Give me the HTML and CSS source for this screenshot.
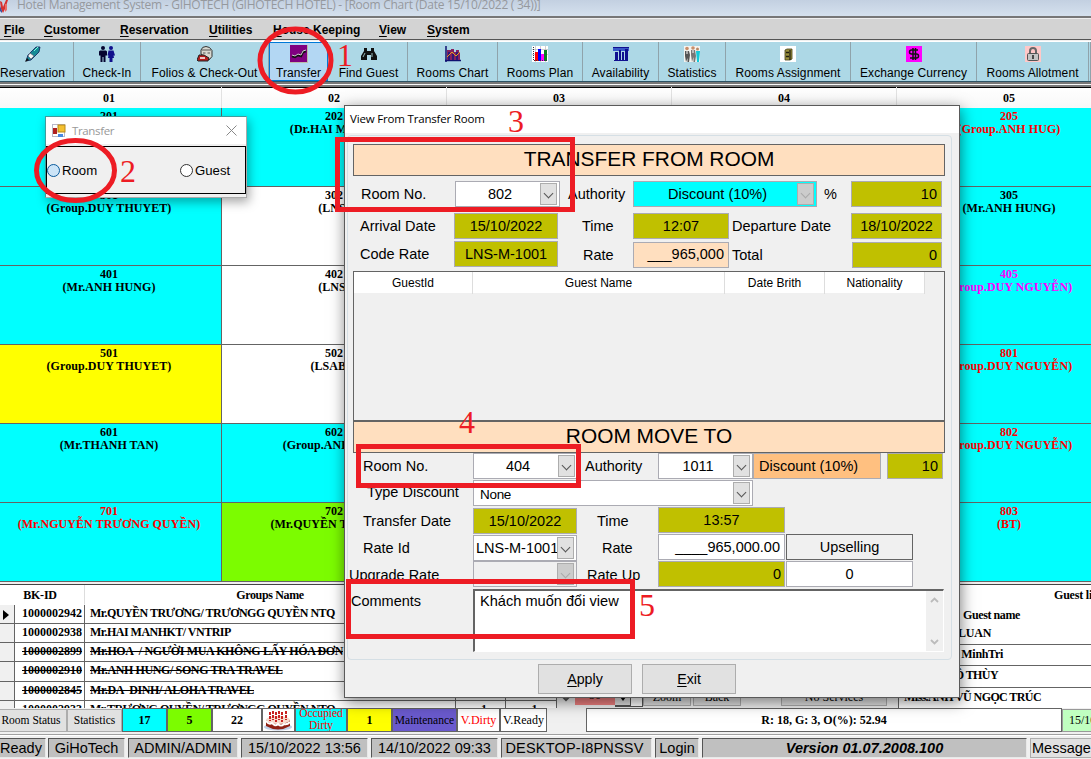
FILE: index.html
```html
<!DOCTYPE html>
<html lang="en">
<head>
<meta charset="utf-8">
<title>Hotel Management System</title>
<link rel="stylesheet" href="styles.css">
</head>
<body>
<div class="app">
  <header class="titlebar">
    <svg class="logo" width="10" height="14" viewBox="0 0 10 14"><path d="M0 1l2 1 1 5 3-7 2 0-3 9-2 4-2-4z" fill="#d63030"/><path d="M5 4l2 0 0 6-2 2z" fill="#e9706a"/><path d="M0 6l2 5v2l-2-2z" fill="#3c4f9c"/></svg>
    <span class="title">Hotel Management System - GIHOTECH (GIHOTECH HOTEL) - [Room Chart (Date 15/10/2022 ( 34))]</span>
  </header>
  <nav class="menubar">
    <span class="m1"><u>F</u>ile</span><span class="m2"><u>C</u>ustomer</span><span class="m3"><u>R</u>eservation</span><span class="m4"><u>U</u>tilities</span><span class="m5"><u>H</u>ouse Keeping</span><span class="m6"><u>V</u>iew</span><span class="m7"><u>S</u>ystem</span>
  </nav>
  <div class="toolbar">
    <div class="tool t1"><svg viewBox="0 0 16 16"><path d="M1 15l2-6 8-8 4 0-1 5-8 8z" fill="#178a96" stroke="#10205a" stroke-width=".8"/><path d="M9 5l4-4" stroke="#7fd" fill="none"/><path d="M5 7l4 3-3 3-3-3z" fill="#f4f4f4" stroke="#556" stroke-width=".6"/><path d="M0 16l2-4 2 2z" fill="#111"/></svg><span>Reservation</span></div>
    <div class="tool t2"><svg viewBox="0 0 16 16"><circle cx="4" cy="2" r="2" fill="#050530"/><path d="M1 4.500h6l1 1v4H6.500V16h-2v-5h-1v5h-2V9.500H0v-4z" fill="#050530"/><circle cx="12" cy="2" r="2" fill="#10108c"/><path d="M9.500 4.500h5l1.500 5h-1.500l.5 2.500h-1.500v4h-3v-4H9l.5-2.500H8.500z" fill="#10108c"/></svg><span>Check-In</span></div>
    <div class="tool t3"><svg viewBox="0 0 16 16"><path d="M4 8V4q1-3.500 5-3.500T15 4.500v6l-3 3.500z" fill="#d8d8d0" stroke="#333"/><path d="M5 4h9M6 7h2.500M10.500 7H13" stroke="#555"/><path d="M0 14l2-5 5 0 5 3-1 3H1z" fill="#b51c1c" stroke="#222"/><path d="M3 12h5" stroke="#fff" stroke-width="1.500"/></svg><span>Folios &amp; Check-Out</span></div>
    <div class="tool t4 selected"><svg class="big" viewBox="0 0 18 18"><rect width="18" height="18" fill="#800080"/><path d="M2 11l3 1 3-2 3 1 2-4 3-1" stroke="#111" stroke-width="2.400" fill="none"/><path d="M2 10l3 1 3-2 3 1 2-4 3-1" stroke="#d8c8d8" fill="none"/><path d="M0 17.500h18M17.500 0v18" stroke="#bba"/></svg><span>Transfer</span></div>
    <div class="tool t5"><svg viewBox="0 0 16 16"><path d="M3 2h3v3h4V2h3v3l3 5v4h-6V9H6v5H0v-4l3-5z" fill="#111"/><path d="M2 11l2-4M11 7v4" stroke="#9bb"/></svg><span>Find Guest</span></div>
    <div class="tool t6"><svg viewBox="0 0 16 16"><path d="M1 0v16M0 14.500h16" stroke="#101070" stroke-width="1.500"/><path d="M2 4h4V3h3v3h2V4h3v3h1v7H2z" fill="#842060"/><path d="M4 6v8M8 8v6M12 6v8" stroke="#141480" stroke-width="1.500"/><path d="M2 11l5-5 4 4 4-4" stroke="#e5a020" fill="none"/></svg><span>Rooms Chart</span></div>
    <div class="tool t7"><svg viewBox="0 0 16 16"><rect width="16" height="16" fill="#fff"/><path d="M0 3.500h16M0 8.500h16M3.500 0v16M8.500 0v16M13.500 0v16" stroke="#bbb" stroke-width=".7"/><path d="M3 6h3v9H3z" fill="#f00"/><path d="M6 3h3v12H6z" fill="#00f"/><path d="M9 8h3v7H9z" fill="#f0f"/><path d="M12 4h3v11h-3z" fill="#088020"/><path d="M1.500 1v13.500H16" stroke="#334" stroke-dasharray="1 1" fill="none"/></svg><span>Rooms Plan</span></div>
    <div class="tool t8"><svg viewBox="0 0 16 16"><path d="M0 1h16v4H0z" fill="#3858c8"/><path d="M0 1.500h16M1 14.500h14" stroke="#101090"/><path d="M2 6h3v8H2zM6 4h2v10H6zM9 6h2v8H9zM12 3h3v11h-3z" fill="#101090"/></svg><span>Availability</span></div>
    <div class="tool t9"><svg viewBox="0 0 16 16"><rect width="16" height="16" fill="#f4f4f0"/><circle cx="3" cy="2.500" r="1.800" fill="#c98e6a"/><circle cx="9" cy="2" r="1.800" fill="#c98e6a"/><path d="M1 5h4l1 4-1 7H3.500v-4L2 16 1 10z" fill="#555"/><path d="M7 4h4l1 6-1 6H9.500v-5L8 16 7 9z" fill="#777"/><circle cx="13.500" cy="3" r="1.500" fill="#b86"/><path d="M12 5h4l-1 11h-2z" fill="#12c8d8"/><path d="M3 5v3M9 4v3" stroke="#fff"/></svg><span>Statistics</span></div>
    <div class="tool t10"><svg viewBox="0 0 16 16"><rect width="16" height="16" fill="#fff"/><path d="M5 4l2-1h5v10l-2 1H5z" fill="#99903c" stroke="#44401a" stroke-width=".8"/><path d="M10 4v10M6 6.500h3M6 10.500h3" stroke="#221f10" stroke-width="1.300"/></svg><span>Rooms Assignment</span></div>
    <div class="tool t11"><svg viewBox="0 0 16 16"><rect width="16" height="16" fill="#f0f"/><path d="M12 4H5.500Q3.500 4 3.500 6t2 2h5q2 0 2 2t-2 2H4M7 2v12M9.500 2v12" stroke="#111" stroke-width="1.500" fill="none"/></svg><span>Exchange Currency</span></div>
    <div class="tool t12"><svg viewBox="0 0 16 16"><rect width="16" height="16" fill="#ffc8c8"/><path d="M5 8V5q0-3 3-3t3 3v3" stroke="#666" stroke-width="2" fill="none"/><rect x="2.500" y="7.500" width="11" height="7" rx="1" fill="#c4c4c4" stroke="#555"/><path d="M8 9v4" stroke="#222" stroke-width="1.500"/></svg><span>Rooms Allotment</span></div>
    <div class="tool t13"></div>
  </div>
  <div class="chart-head"><span>01</span><span>02</span><span>03</span><span>04</span><span>05</span></div>
  <main class="chart">
    <div class="cell">201<br>(Mr.ANH HUNG)</div><div class="cell">202<br>(Dr.HAI MANH)</div><div class="cell"></div><div class="cell"></div><div class="cell red">205<br>(Group.ANH HUG)</div>
    <div class="cell">301<br>(Group.DUY THUYET)</div><div class="cell free">302<br>(LNS)</div><div class="cell"></div><div class="cell"></div><div class="cell">305<br>(Mr.ANH HUNG)</div>
    <div class="cell">401<br>(Mr.ANH HUNG)</div><div class="cell free">402<br>(LNS)</div><div class="cell"></div><div class="cell"></div><div class="cell pink">405<br>(Group.DUY NGUYỄN)</div>
    <div class="cell yellow">501<br>(Group.DUY THUYET)</div><div class="cell free">502<br>(LSABF)</div><div class="cell"></div><div class="cell"></div><div class="cell red">801<br>(Group.DUY NGUYỄN)</div>
    <div class="cell">601<br>(Mr.THANH TAN)</div><div class="cell">602<br>(Group.ANH HUG)</div><div class="cell"></div><div class="cell"></div><div class="cell red">802<br>(Group.DUY NGUYỄN)</div>
    <div class="cell red">701<br>(Mr.NGUYỄN TRƯƠNG QUYỀN)</div><div class="cell green">702<br>(Mr.QUYỀN TRƯƠNG)</div><div class="cell"></div><div class="cell"></div><div class="cell red">803<br>(BT)</div>
  </main>
  <section class="lists">
    <div class="groups">
      <div class="grow ghead"><i></i><b>BK-ID</b><b>Groups Name</b><b></b><b></b></div>
      <div class="grow"><i><svg width="6" height="10"><path d="M0 0l6 5-6 5z"/></svg></i><b>1000002942</b><b>Mr.QUYỀN TRƯƠNG/ TRƯƠNGG QUYỀN NTQ</b><b></b><b></b></div>
      <div class="grow"><i></i><b>1000002938</b><b>Mr.HAI MANHKT/ VNTRIP</b><b></b><b></b></div>
      <div class="grow out"><i></i><b>1000002899</b><b class="wide">Mr.HOA&nbsp; / NGƯỜI MUA KHÔNG LẤY HÓA ĐƠN</b><b></b><b></b></div>
      <div class="grow out"><i></i><b>1000002910</b><b class="wide">Mr.ANH HUNG/ SONG TRA TRAVEL</b><b></b><b></b></div>
      <div class="grow out"><i></i><b>1000002845</b><b class="wide">Mr.DA&nbsp; DINH/ ALOHA TRAVEL</b><b></b><b></b></div>
      <div class="grow"><i></i><b>1000002933</b><b>Mr.TRƯƠNG QUYỀN/ TRƯƠNGG QUYỀN NTQ</b><b class="n">1</b><b class="n">1</b></div>
    </div>
    <div class="tools">
      <span class="scr"><svg width="10" height="7"><path d="M1 1l4 4 4-4" stroke="#555" stroke-width="2" fill="none"/></svg></span>
      <span class="spin">50</span><span class="updn"><svg width="6" height="4"><path d="M0 0h6L3 4z"/></svg></span><span class="chk"></span>
      <span class="tb zoomb">Zoom</span><span class="tb back">Back</span><span class="tb serv">No Services</span>
    </div>
    <div class="guests">
      <div class="gtitle">Guest list</div>
      <div class="gcol">Guest name</div>
      <div class="grw">Mr.TUAN LUAN</div>
      <div class="grw">Mr.Tran : MinhTri</div>
      <div class="grw">Mrs.NGÔ THÙY</div>
      <div class="grw">Miss.ANH VŨ NGỌC TRÚC</div>
    </div>
  </section>
  <section class="legend">
    <span class="btn l1">Room Status</span><span class="btn l2">Statistics</span><b class="cyan l3">17</b><b class="lime l3">5</b><b class="l4">22</b>
    <span class="l5"><svg width="29" height="22" viewBox="0 0 29 22"><ellipse cx="14" cy="18" rx="14" ry="3.500" fill="#bfd0e8"/><path d="M2 11v6q12 7 24 0v-6z" fill="#8f2014"/><ellipse cx="14" cy="11" rx="12" ry="4" fill="#f7d9cc"/><path d="M2 12q3 4 6 2 3 4 6 1 3 3 6 0 3 1 6-2" stroke="#fff" stroke-width="2" fill="none"/><path d="M6 3v9M9 2v9M12 3v10M15 2v9M18 3v10M22 2v9" stroke="#c82222" stroke-width="2" stroke-dasharray="3 1"/></svg></span>
    <span class="cyan occ l6">Occupied Dirty</span><b class="yel l3">1</b><span class="mnt l7">Maintenance</span><span class="rd l8">V.Dirty</span><span class="l9">V.Ready</span>
    <b class="sum">R: 18, G: 3, O(%): 52.94</b><span class="dt">15/10</span>
  </section>
  <footer class="status">
    <span class="s1">Ready</span><span class="s2">GiHoTech</span><span class="s3">ADMIN/ADMIN</span><span class="s4">15/10/2022 13:56</span><span class="s4">14/10/2022 09:33</span><span class="s5">DESKTOP-I8PNSSV</span><span class="s6">Login</span><span class="s7">Version 01.07.2008.100</span><span class="s8">Message</span>
  </footer>

  <section class="win small-win">
    <div class="wtitle"><svg width="14" height="14" viewBox="0 0 14 14"><rect x=".5" y=".5" width="12" height="12" fill="#fff" stroke="#b8b8c8"/><rect x="1" y="4" width="4" height="6" fill="#b02020"/><rect x="6" y="1" width="7" height="7" fill="#f4c030" stroke="#b88a18"/><rect x="6" y="10" width="5" height="3" fill="#4a88e0"/></svg><span>Transfer</span><svg class="close" width="11" height="11" viewBox="0 0 11 11"><path d="M.5.5l10 10M10.500.5l-10 10" stroke="#888" fill="none"/></svg></div>
    <div class="radios"><label><i class="on"></i>Room</label><label><i></i>Guest</label></div>
  </section>

  <section class="win dialog">
    <div class="dtitle">View From Transfer Room</div>
    <div class="frame">
      <h2 class="banner">TRANSFER FROM ROOM</h2>
      <div class="row r1"><span class="lab p8">Room No.</span><span class="fld combo"><em>802</em><i></i></span><span class="lab p8">Authority</span><span class="fld combo aqua off"><em>Discount (10%)</em><i></i></span><span class="lab p7">%</span><span class="fld olive right">10</span></div>
      <div class="row r2"><span class="lab p7">Arrival Date</span><span class="fld olive">15/10/2022</span><span class="lab p24">Time</span><span class="fld olive">12:07</span><span class="lab p3">Departure Date</span><span class="fld olive">18/10/2022</span></div>
      <div class="row r3"><span class="lab p7">Code Rate</span><span class="fld olive up">LNS-M-1001</span><span class="lab p25">Rate</span><span class="fld peach right">___965,000</span><span class="lab p3">Total</span><span class="fld olive right">0</span></div>
      <div class="table"><div class="thead"><span>GuestId</span><span>Guest Name</span><span>Date Brith</span><span>Nationality</span></div></div>
      <h2 class="banner second">ROOM MOVE TO</h2>
      <div class="row r4"><span class="lab p10">Room No.</span><span class="fld combo"><em>404</em><i></i></span><span class="lab p7">Authority</span><span class="fld combo"><em>1011</em><i></i></span><span class="fld orange left">Discount (10%)</span><span></span><span class="fld olive right">10</span></div>
      <div class="row r5"><span class="lab p14">Type Discount</span><span class="fld combo left"><em>None</em><i></i></span></div>
      <div class="row r6"><span class="lab p10">Transfer Date</span><span class="fld olive down">15/10/2022</span><span class="lab p20">Time</span><span class="fld olive">13:57</span></div>
      <div class="row r6"><span class="lab p10">Rate Id</span><span class="fld combo down tight"><em>LNS-M-1001</em><i></i></span><span class="lab p25">Rate</span><span class="fld right">____965,000.00</span><span class="fld ups">Upselling</span></div>
      <div class="row r6"><span class="lab p0">Upgrade Rate</span><span class="fld combo grey off"><em></em><i></i></span><span class="lab p10">Rate Up</span><span class="fld olive right zero">0</span><span class="fld">0</span></div>
      <div class="row r7"><span class="lab p2">Comments</span><div class="memo"><span>Khách muốn đổi view</span><div class="bar"><svg width="9" height="6"><path d="M1 5l3.500-3.500L8 5" stroke="#bbb" stroke-width="1.800" fill="none"/></svg><svg width="9" height="6"><path d="M1 1l3.500 3.500L8 1" stroke="#bbb" stroke-width="1.800" fill="none"/></svg></div></div></div>
    </div>
    <div class="actions"><span><u>A</u>pply</span><span><u>E</u>xit</span></div>
  </section>

  <svg class="marks" width="1091" height="759" viewBox="0 0 1091 759">
    <g fill="none" stroke="#ed1c24" stroke-width="5">
      <ellipse cx="295.500" cy="60.500" rx="35.500" ry="31.500"/>
      <ellipse cx="75.500" cy="170.500" rx="39" ry="30"/>
      <path d="M337.500 139.500h235v70h-235zM358.500 446.500h220v39h-220zM348.500 581.500h284v55h-284z"/>
    </g>
    <g class="nums"><text x="337" y="66">1</text><text x="120" y="182">2</text><text x="508" y="132">3</text><text x="459" y="433">4</text><text x="639" y="616">5</text></g>
  </svg>
</div>
</body>
</html>
```
FILE: styles.css
```css
* { box-sizing: border-box; }
body { margin: 0; font-family: "Liberation Sans", Arial, sans-serif; color: #000; }
.app { position: relative; width: 1091px; height: 759px; overflow: hidden; display: flex; flex-direction: column; background: #f0f0f0; white-space: nowrap; }
.titlebar { height: 16px; display: flex; background: linear-gradient(#c3d0e1, #d5e1ee); color: #96999e; }
.logo { flex: none; margin-right: 7px; }
.title { font: 12px/14px "Open Sans", sans-serif; margin-top: -2px; letter-spacing: -.265px; }
.menubar { height: 24px; border-top: 2px solid #777; box-shadow: inset 0 1px #eee; background: #d3d3d3; font-weight: bold; font-size: 12px; line-height: 24px; display: flex; padding-left: 4px; border-bottom: 1px solid #555; }
.menubar u, .actions u { text-underline-offset: 2px; }
.m1 { width: 40px; } .m2 { width: 76px; } .m3 { width: 89px; } .m4 { width: 64px; } .m5 { width: 106px; } .m6 { width: 48px; }
.toolbar { height: 41px; margin-top: 1px; border-top: 1px solid #fff; border-bottom: 1px solid #2c5365; background: #add8e6; display: flex; }
.tool { display: flex; flex-direction: column; align-items: center; border-right: 1px solid #8fa3ab; font-size: 12px; letter-spacing: .1px; }
.tool svg { width: 16px; height: 16px; margin: 4px 0 2px; flex: none; }
.tool svg.big { width: 18px; height: 18px; margin: 2px 0 1px; }
.tool span { line-height: 18px; }
.t1 { width: 74px; padding-right: 8px; } .t2 { width: 67px; } .t3 { width: 128px; } .t4 { width: 59px; } .t5 { width: 80px; padding-left: 2px; } .t6 { width: 90px; } .t7 { width: 85px; } .t8 { width: 76px; } .t9 { width: 67px; } .t10 { width: 125px; } .t11 { width: 126px; } .t12 { width: 112px; } .t13 { flex: 1; }
.selected { background: #b3d7f3; border: 1px solid #0078d7; }
.chart-head { height: 26px; border-top: 5px double #777; display: grid; grid-template-columns: repeat(5, 225px); margin-left: -3px; width: 1122px; background: linear-gradient(#fff, #f8f8f8); box-shadow: inset 0 1px #000; font: bold 12px/22px "Liberation Serif", serif; text-align: center; }
.chart-head span { border-right: 1px solid #e2e2e2; }
.chart { display: grid; grid-template-columns: repeat(5, 225px); grid-template-rows: repeat(6, 79px); margin-left: -3px; width: 1122px; font: bold 12px/13px "Liberation Serif", serif; letter-spacing: .06px; text-align: center; }
.cell { background: #0ff; border-right: 1px solid #646464; border-bottom: 1px solid #646464; padding-top: 2px; overflow: hidden; }
.free { background: #fff; } .yellow { background: #ff0; } .green { background: #7cfc00; }
.red { color: #f00; } .pink { color: #f0f; }
.lists { height: 126px; overflow: hidden; display: flex; font: bold 12px/17px "Liberation Serif", serif; border-top: 2px solid #f0f0f0; }
.groups { width: 557px; flex: none; border-top: 1px solid #444; background: #fff; }
.grow { display: grid; grid-template-columns: 15px 70px 371px 50px 51px; height: 19.150px; }
.grow > * { border-right: 1px solid #646464; border-bottom: 1px solid #646464; font-style: normal; overflow: hidden; }
.grow > i { background: #f0f0f0; padding-left: 3px; } .grow i svg { display: block; margin-top: 5px; }
.grow > b { padding-left: 7px; } .grow > b:nth-child(3) { padding-left: 5px; letter-spacing: -.52px; } .grow > b.wide:nth-child(3) { letter-spacing: -.38px; } .grow > .n { text-align: center; }
.grow.ghead { height: 20px; } .ghead > i, .grow.ghead > b { border-color: #fff; background: #fff; text-align: center; line-height: 21px; padding: 0; } .grow.ghead > b:nth-child(2) { border-right-color: #ddd; padding-right: 19px; letter-spacing: -.2px; }
.grow.ghead > b:nth-child(3) { letter-spacing: -.35px; }
.out b { text-decoration: line-through; }
.tools { width: 342px; flex: none; display: flex; align-items: flex-end; padding-bottom: 1px; font-weight: normal; }
.tools > span { height: 22px; text-align: center; }
.scr { width: 18px; padding-top: 8px; line-height: 10px; }
.spin { width: 40px; background: #f08080; margin-bottom: 2px; line-height: 25px; } .updn { width: 16px; background: #e1e1e1; border-right: 1px solid #555; border-bottom: 2px solid #555; padding-top: 7px; line-height: 10px; } .chk { width: 12px; background: #fff; border-bottom: 1px solid #555; border-right: 1px solid #555; }
.tb { background: #e1e1e1; border: 1px solid #adadad; line-height: 24px; margin-bottom: 1px; }
.zoomb { width: 48px; } .back { width: 48px; margin-left: 2px; } .serv { width: 106px; margin-left: 40px; }
.guests { flex: 1; margin-left: -1px; border-left: 1px solid #646464; border-top: 1px solid #444; background: #fff; }
.gtitle { height: 21px; line-height: 21px; padding-left: 155px; letter-spacing: -.2px; } .gcol { height: 18px; line-height: 19px; padding-left: 64px; letter-spacing: -.4px; }
.grw { height: 21.200px; line-height: 18px; border-bottom: 1px solid #646464; padding-left: 5px; letter-spacing: -.6px; width: 193px; overflow: hidden; }
.grw:last-child { border-bottom: 0; }
.gcol + .grw { line-height: 19px; }
.grw:nth-child(3) { text-align: right; padding-right: 114px; letter-spacing: -.2px; }
.grw:nth-child(4) { text-align: right; padding-right: 89px; letter-spacing: -.3px; }
.grw:nth-child(5) { text-align: right; padding-right: 94px; }
.legend { height: 24px; display: flex; font: 12px/22px "Liberation Serif", serif; background: #f0f0f0; text-align: center; }
.legend > * { border: 1px solid #646464; background: #fff; overflow: hidden; flex: none; }
.legend .btn { background: #e1e1e1; border-color: #adadad; font-size: 11.500px; margin-top: 1px; line-height: 20px; }
.legend .l1 { width: 67px; border-left: 0; padding-right: 4px; } .l2 { width: 55px; } .l3 { width: 45px; } .l4 { width: 50px; } .l5 { width: 33px; } .l5 svg { display: block; margin: 0 1px; } .l6 { width: 52px; } .l7 { width: 65px; } .l8 { width: 43px; } .l9 { width: 47px; }
.legend .cyan { background: #0ff; } .legend .lime { background: #7cfc00; } .legend .yel { background: #ff0; } .legend .mnt { background: #6a5acd; font-size: 11.500px; }
.legend .occ { color: #f00; white-space: normal; line-height: 12px; font-size: 11.500px; letter-spacing: -.1px; display: flex; align-items: center; padding-bottom: 2px; } .rd { color: #f00; }
.sum { width: 476px; margin-left: 39px; } .legend .dt { width: 40px; background: #c0ffc0; border-color: #999; text-align: left; padding-left: 6px; margin-top: 1px; line-height: 20px; }
.status { height: 25px; margin-top: 2px; padding-top: 3px; border-top: 1px solid #a0a0a0; display: flex; gap: 3px; font-size: 14.500px; line-height: 18px; text-align: center; box-shadow: inset 0 1px #fff; }
.status span { height: 20px; flex: none; background: #c0c0c0; border: 1px solid #555; border-right-color: #e8e8e8; border-bottom-color: #e8e8e8; overflow: hidden; }
.status .s1 { width: 46px; margin-right: -1px; border-left: 0; text-align: left; } .s2 { width: 77px; } .s3 { width: 110px; } .s4 { width: 127px; } .s5 { width: 151px; } .s6 { width: 44px; } .s7 { width: 325px; font-weight: bold; font-style: italic; } .status .s8 { width: 70px; background: #e1e1e1; text-align: left; padding-left: 1px; border-color: #adadad; }
.status .s5 { letter-spacing: .2px; padding-right: 4px; }
/* floating windows */
.win { position: absolute; background: #f0f0f0; }
.small-win { left: 45px; top: 116px; width: 202px; height: 82px; border: 1px solid #419c9c; border-right-color: #aaa; border-bottom-color: #aaa; box-shadow: 2px 4px 10px rgba(0,0,0,.35); }
.wtitle { height: 27px; background: #fff; display: flex; align-items: center; padding-left: 6px; gap: 6px; font: 11.500px "Open Sans", sans-serif; color: #999; letter-spacing: -.35px; } .close { margin: 0 9px 0 auto; }
.radios { margin: 2px 0 0; height: 48px; border: 1px solid #000; font-size: 13.200px; display: grid; grid-template-columns: 133px 1fr; align-items: center; }
.radios label { display: flex; align-items: center; gap: 2px; } .radios i { width: 13px; height: 13px; border: 1px solid #333; border-radius: 50%; background: #fff; } .radios .on { border-color: #0a5a9c; background: #cce4f7; }
.dialog { left: 344px; top: 105px; width: 616px; height: 593px; border: 1px solid #5a5a5a; box-shadow: 1px 4px 14px rgba(0,0,0,.5); padding: 0 7px 0 2px; }
.dtitle { height: 27px; margin: 0 -7px 2px -2px; background: #fff; font: 11.500px/26px "Open Sans", sans-serif; letter-spacing: -.18px; padding-left: 5px; }
.frame { height: 525px; border: 1px solid #d5dfe5; border-radius: 4px; padding: 8px 6px 0 5px; }
.banner { margin: 0; height: 32px; width: 592px; border: 1px solid #646464; background: #ffdfbf; font-size: 20.900px; font-weight: normal; line-height: 28px; text-align: center; }
.row { display: grid; grid-template-rows: 100%; font-size: 14.500px; line-height: 24px; height: 26px; }
.lab { line-height: 26px; }
.r1 { grid-template-columns: 102px 105px 73px 184px 34px 91px; margin-top: 5px; }
.r2 { grid-template-columns: 101px 104px 75px 96px 122px 91px; margin-top: 6px; }
.r3 { grid-template-columns: 101px 104px 75px 96px 123px 90px; margin-top: 3px; }
.r3 .lab:first-child { line-height: 24px; } .r3 .peach { line-height: 23px; }
.up { margin-top: -1px; margin-bottom: 1px; } .down { margin-top: 1px; margin-bottom: -1px; }
.fld { border: 1px solid #ababb3; background: #fff; text-align: center; overflow: hidden; }
.olive { background: #c0c000; } .peach { background: #ffdfbf; } .aqua { background: #0ff; } .orange { background: #ffc080; } .grey { background: #f0f0f0; } .ups { background: #f0f0f0; border-color: #646464; }
.right { text-align: right; padding-right: 4px; } .zero { padding-right: 3px; } .left { text-align: left; padding-left: 5px; }
.combo { display: flex; padding: 1px; } .combo em { flex: 1; font-style: normal; line-height: 22px; overflow: hidden; padding-left: 3px; text-align: center; }
.combo i { width: 17px; background: #e1e1e1; border: 1px solid #adadad; display: grid; place-items: center; margin-right: 1px; }
.combo i::after { content: ""; width: 6px; height: 6px; border: solid #555; border-width: 0 1px 1px 0; transform: translateY(-1px) rotate(45deg); }
.combo.off i { background: #ccc; } .combo.off i::after { border-color: #aaa; }
.p0 { margin-left: -4px; } .p2 { margin-left: -2px; } .p3 { padding-left: 3px; } .p7 { padding-left: 7px; } .p8 { padding-left: 8px; } .p10 { padding-left: 10px; } .p14 { padding-left: 14px; } .p20 { padding-left: 20px; } .p24 { padding-left: 24px; } .p25 { padding-left: 25px; }
.table { width: 592px; height: 150px; margin-top: 3px; border: 1px solid #646464; }
.thead { display: grid; grid-template-columns: 119px 252px 100px 100px; width: 571px; height: 21px; background: #fff; font-size: 12px; line-height: 22px; text-align: center; } .thead span { border-right: 1px solid #ddd; }
.r4 { grid-template-columns: 120px 105px 80px 95px 128px 6px 56px; }
.r5 { grid-template-columns: 120px 280px; margin-top: 1px; } .r5 .lab { line-height: 25px; } .r5 .combo { padding-left: 1px; } .r5 em { text-align: left; padding-left: 5px; font-size: 13.500px; line-height: 26px; letter-spacing: -.3px; }
.r6 { grid-template-columns: 120px 104px 81px 127px 1px 127px; margin-top: 1px; } .r6 .lab { line-height: 28px; }
.r6 > :nth-child(5) { grid-column: 6; }
.tight em { padding-left: 1px; text-align: left; }
.r7 { grid-template-columns: 120px 471px; height: 63px; margin-top: 2px; } .r7 .lab { line-height: 24px; }
.memo { border: 1px solid #fff; border-top: 2px solid #646464; border-left: 2px solid #646464; background: #fff; display: flex; justify-content: space-between; line-height: 20px; padding-left: 5px; font-size: 14.600px; }
.bar { width: 17px; background: #f0f0f0; display: flex; flex-direction: column; justify-content: space-between; align-items: center; padding: 6px 0; }
.actions { display: flex; gap: 10px; margin: 4px 0 0 191px; font-size: 14.200px; line-height: 29px; text-align: center; } .actions span { width: 94px; height: 30px; background: #e1e1e1; border: 1px solid #adadad; }
/* callouts over the windows */
.marks { position: absolute; left: 0; top: 0; }
.nums { fill: #ed1c24; font: 32px "Liberation Serif", serif; }
```
